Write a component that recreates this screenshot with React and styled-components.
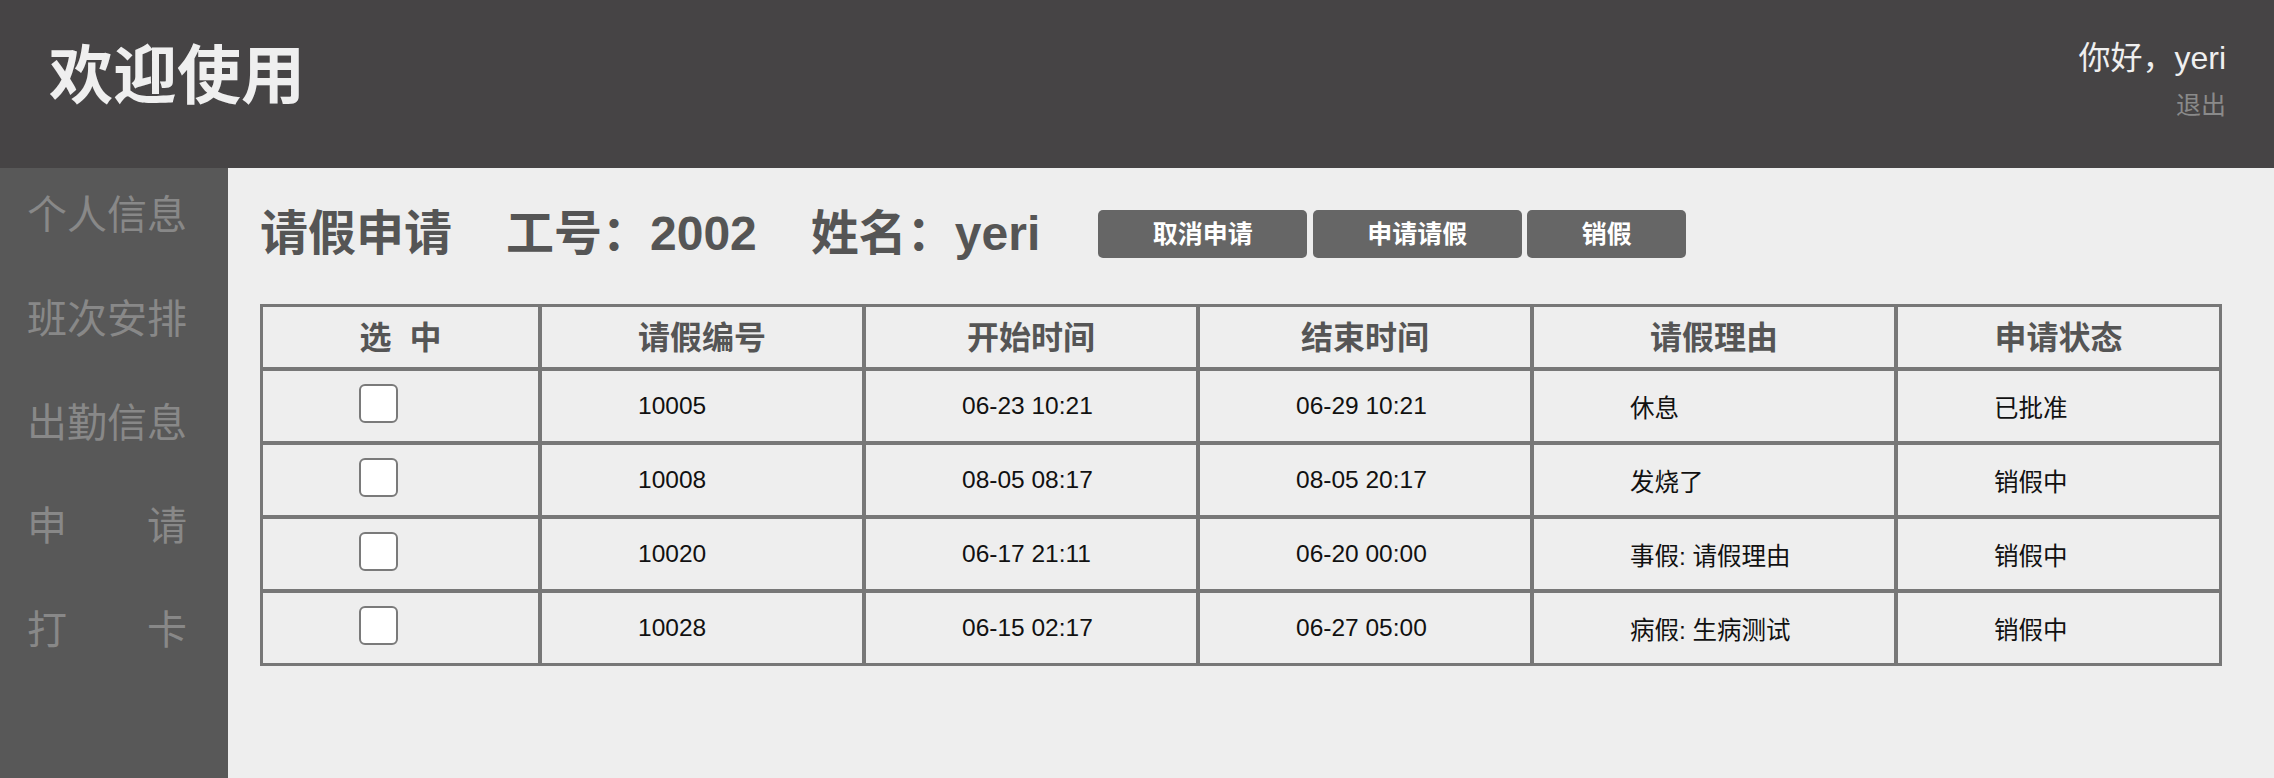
import React from "react";
import styled, { createGlobalStyle } from "styled-components";

const FONT = `"Liberation Sans", "Noto Sans CJK SC", sans-serif`;

const Global = createGlobalStyle`
  html, body {
    margin: 0;
    padding: 0;
    height: 100%;
    overflow: hidden;
    background: #eeeeee;
    font-family: ${FONT};
  }
  #root { height: 100%; }
`;

const Page = styled.div`
  display: flex;
  flex-direction: column;
  height: 100%;
`;

const Header = styled.header`
  flex-shrink: 0;
  height: 168px;
  box-sizing: border-box;
  background: #464445;
  display: flex;
  justify-content: space-between;
  align-items: flex-start;
  padding: 0 48px 0 49px;
`;

const Title = styled.h1`
  margin: 44px 0 0;
  font-size: 64px;
  line-height: 64px;
  font-weight: 700;
  color: #efefef;
`;

const User = styled.div`
  padding-top: 42px;
  display: flex;
  flex-direction: column;
  align-items: flex-end;
  gap: 19px;
`;

const Greeting = styled.div`
  font-size: 32px;
  line-height: 32px;
  color: #efefef;
`;

const Logout = styled.a`
  font-size: 25px;
  line-height: 25px;
  color: #8a8a8a;
  text-decoration: none;
  cursor: pointer;
`;

const Body = styled.div`
  flex: 1;
  display: flex;
  min-height: 0;
`;

const Sidebar = styled.nav`
  width: 228px;
  flex-shrink: 0;
  background: #585858;
  box-sizing: border-box;
  padding: 17px 0 0 27px;
  display: flex;
  flex-direction: column;
  gap: 43.8px;
`;

const NavItem = styled.a`
  display: block;
  width: 160px;
  font-size: 40px;
  line-height: 60px;
  color: #888888;
  text-align: justify;
  text-align-last: justify;
  text-decoration: none;
  white-space: nowrap;
  cursor: pointer;
`;

const Main = styled.main`
  flex: 1;
  background: #eeeeee;
  padding: 42px 0 0 32px;
  box-sizing: border-box;
`;

const TitleRow = styled.div`
  display: flex;
  align-items: center;
  height: 48px;
`;

const Heading = styled.span`
  font-size: 48px;
  line-height: 48px;
  font-weight: 700;
  color: #555555;
  white-space: nowrap;
  margin-left: ${(p) => (p.$first ? "0" : "54px")};
`;

const Actions = styled.div`
  display: flex;
  gap: 5.5px;
  margin-left: 58px;
`;

const Button = styled.button`
  height: 48px;
  padding: 0 54.5px;
  border: none;
  border-radius: 5px;
  background: #666666;
  color: #ffffff;
  font-family: ${FONT};
  font-size: 25px;
  font-weight: 700;
  line-height: 48px;
  cursor: pointer;
`;

const Table = styled.table`
  margin-top: 46px;
  width: 1962px;
  table-layout: fixed;
  border-collapse: separate;
  border-spacing: 0;
  border: 1px solid #777777;
`;

const Th = styled.th`
  box-sizing: border-box;
  width: ${(p) => p.$w}px;
  height: 64px;
  border: 2px solid #777777;
  padding: 0 0 4px;
  font-size: 32px;
  font-weight: 700;
  color: #555555;
  text-align: center;
  vertical-align: middle;
  white-space: nowrap;
`;

const Td = styled.td`
  box-sizing: border-box;
  height: 74px;
  border: 2px solid #777777;
  padding: 0 0 0 96px;
  font-size: 24.5px;
  color: #111111;
  text-align: left;
  vertical-align: middle;
  white-space: nowrap;
`;

const Check = styled.input.attrs({ type: "checkbox" })`
  appearance: none;
  -webkit-appearance: none;
  display: block;
  width: 39px;
  height: 39px;
  margin: 0 0 6px;
  box-sizing: border-box;
  border: 2px solid #7a7a7a;
  border-radius: 6px;
  background: #ffffff;
  cursor: pointer;
`;

const columns = [
  { label: "选\u00a0\u00a0中", w: 279 },
  { label: "请假编号", w: 324 },
  { label: "开始时间", w: 334 },
  { label: "结束时间", w: 334 },
  { label: "请假理由", w: 364 },
  { label: "申请状态", w: 325 },
];

const rows = [
  { id: "10005", start: "06-23 10:21", end: "06-29 10:21", reason: "休息", status: "已批准" },
  { id: "10008", start: "08-05 08:17", end: "08-05 20:17", reason: "发烧了", status: "销假中" },
  { id: "10020", start: "06-17 21:11", end: "06-20 00:00", reason: "事假: 请假理由", status: "销假中" },
  { id: "10028", start: "06-15 02:17", end: "06-27 05:00", reason: "病假: 生病测试", status: "销假中" },
];

const nav = ["个人信息", "班次安排", "出勤信息", "申 请", "打 卡"];

export default function App() {
  return (
    <>
      <Global />
      <Page>
        <Header>
          <Title>欢迎使用</Title>
          <User>
            <Greeting>你好，yeri</Greeting>
            <Logout>退出</Logout>
          </User>
        </Header>
        <Body>
          <Sidebar>
            {nav.map((n) => (
              <NavItem key={n}>{n}</NavItem>
            ))}
          </Sidebar>
          <Main>
            <TitleRow>
              <Heading $first>请假申请</Heading>
              <Heading>工号：2002</Heading>
              <Heading>姓名：yeri</Heading>
              <Actions>
                <Button>取消申请</Button>
                <Button>申请请假</Button>
                <Button>销假</Button>
              </Actions>
            </TitleRow>
            <Table>
              <thead>
                <tr>
                  {columns.map((c) => (
                    <Th key={c.label} $w={c.w}>
                      {c.label}
                    </Th>
                  ))}
                </tr>
              </thead>
              <tbody>
                {rows.map((r) => (
                  <tr key={r.id}>
                    <Td>
                      <Check />
                    </Td>
                    <Td>{r.id}</Td>
                    <Td>{r.start}</Td>
                    <Td>{r.end}</Td>
                    <Td>{r.reason}</Td>
                    <Td>{r.status}</Td>
                  </tr>
                ))}
              </tbody>
            </Table>
          </Main>
        </Body>
      </Page>
    </>
  );
}
